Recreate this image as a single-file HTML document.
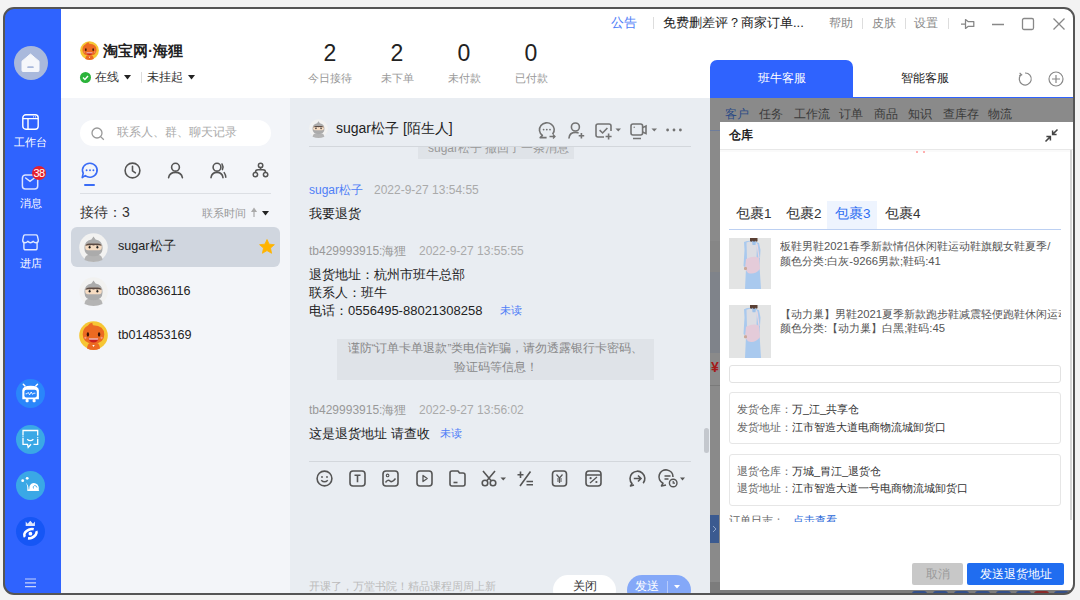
<!DOCTYPE html>
<html><head><meta charset="utf-8">
<style>
*{margin:0;padding:0;box-sizing:border-box}
html,body{width:1080px;height:600px;overflow:hidden;background:#f3f3f3;font-family:"Liberation Sans",sans-serif;color:#333}
.a{position:absolute}
#win{position:absolute;left:4px;top:8px;width:1070px;height:586px;border-radius:10px;overflow:hidden;background:#fff}
#pg{position:absolute;left:-4px;top:-8px;width:1080px;height:600px}
#frame{position:absolute;left:3px;top:7px;width:1072px;height:588px;border:2px solid #555;border-radius:11px;pointer-events:none}
.t{position:absolute;white-space:nowrap;line-height:1}
svg{position:absolute;overflow:visible}
.prod{position:absolute;width:42px;height:51px;background:#dcdcdc;overflow:hidden}
.prod:before{content:"";position:absolute;left:13px;top:5px;width:14px;height:46px;border-radius:6px 6px 2px 2px;background:#9cc0ea}
.prod:after{content:"";position:absolute;left:12px;top:22px;width:13px;height:12px;border-radius:4px;background:#e0bcd0}
.ninja{position:absolute;width:29px;height:29px;border-radius:50%;background:#f1f1ef;overflow:hidden}
.ninja:before{content:"";position:absolute;left:7px;top:5px;width:15px;height:15px;border-radius:50% 50% 45% 45%;background:#9a9a9a}
.ninja:after{content:"";position:absolute;left:8px;top:11px;width:13px;height:5px;border-radius:2px;background:#f3dcc8;box-shadow:0 10px 0 -1px #a8a8a8}

</style></head><body>
<div id="win"><div id="pg">
  <!-- sidebar -->
  <div class="a" style="left:0;top:0;width:61px;height:600px;background:#2f63fe"></div>
  <!-- header -->
  <div class="a" style="left:61px;top:0;width:1019px;height:98px;background:#fff"></div>
  <!-- list panel -->
  <div class="a" style="left:61px;top:98px;width:229px;height:502px;background:#f3f5f9"></div>
  <!-- chat panel -->
  <div class="a" style="left:290px;top:98px;width:420px;height:502px;background:#e9edf2"></div>
  <!-- right panel (under overlay) -->
  <div class="a" style="left:710px;top:98px;width:370px;height:502px;background:#8a8a8a"></div>
  <!-- blue tab -->
  <div class="a" style="left:710px;top:60px;width:143px;height:38px;background:#2f63fe;border-radius:7px 7px 0 0"></div>
  <div class="a" style="left:710px;top:97px;width:370px;height:1px;background:#2f63fe"></div>


  <!-- ===== sidebar ===== -->
  <div class="a" style="left:14px;top:46px;width:34px;height:34px;border-radius:50%;background:#a9b9dc"></div>
  <svg style="left:21px;top:53px" width="20" height="20"><path d="M1 8.2 L9.5 1 L18 8.2 V17.5 Q18 18.5 17 18.5 H2 Q1 18.5 1 17.5Z" fill="#f5f7fb" stroke="#f5f7fb" stroke-width="1" stroke-linejoin="round"/><rect x="6.2" y="13.3" width="6.6" height="1.8" rx="0.9" fill="#a9b9dc"/></svg>
  <svg style="left:22px;top:114px" width="17" height="16"><rect x="0.8" y="0.8" width="15.4" height="14.4" rx="3" stroke="#fff" stroke-width="1.4" fill="none"/><path d="M1 4.6 H16 M6 4.6 V15" stroke="#fff" stroke-width="1.4"/><circle cx="11.6" cy="2.8" r="0.6" fill="#fff"/><circle cx="13.6" cy="2.8" r="0.6" fill="#fff"/></svg>
  <div class="t" style="left:0;top:137px;width:61px;text-align:center;font-size:10.5px;color:#fff">工作台</div>
  <svg style="left:21px;top:174px" width="18" height="16"><rect x="1.4" y="0.9" width="15.3" height="14.2" rx="3" stroke="#dbe4ff" stroke-width="1.5" fill="none"/><path d="M4.6 4 L9 7.4 L13.4 4" stroke="#dbe4ff" stroke-width="1.5" fill="none" stroke-linecap="round"/></svg>
  <div class="a" style="left:32px;top:166px;width:14px;height:14px;border-radius:7px;background:#e5202e"></div>
  <div class="t" style="left:32px;top:167.5px;width:14px;text-align:center;font-size:11px;color:#fff;letter-spacing:-0.6px">38</div>
  <div class="t" style="left:0;top:198px;width:61px;text-align:center;font-size:10.5px;color:#fff">消息</div>
  <svg style="left:22px;top:234px" width="17" height="17"><path d="M3 0.9 H14 Q15 0.9 15.4 1.9 L16.3 6.2 Q16.3 8.7 14 8.7 Q12.2 8.7 11.2 7.3 Q10.1 8.7 8.5 8.7 Q6.9 8.7 5.8 7.3 Q4.8 8.7 3 8.7 Q0.7 8.7 0.7 6.2 L1.6 1.9 Q2 0.9 3 0.9Z" stroke="#dfe8ff" stroke-width="1.4" fill="none" stroke-linejoin="round"/><path d="M1.9 8.4 V13.9 Q1.9 15.8 3.8 15.8 H13.2 Q15.1 15.8 15.1 13.9 V8.4" stroke="#dfe8ff" stroke-width="1.4" fill="none"/></svg>
  <div class="t" style="left:0;top:258px;width:61px;text-align:center;font-size:10.5px;color:#fff">进店</div>
  <!-- app icons -->
  <div class="a" style="left:16px;top:379px;width:29px;height:29px;border-radius:50%;background:#2a86fa"></div>
  <svg style="left:16px;top:379px" width="29" height="29"><path d="M7.3 5.3 L9 7 M21.5 5.3 L19.8 7" stroke="#fff" stroke-width="1.5" stroke-linecap="round"/><path d="M6.3 20.3 V11.5 Q6.3 6.8 14.6 6.8 Q22.9 6.8 22.9 11.5 V20.3Z" fill="#fff"/><rect x="8.4" y="10.8" width="12.4" height="7.6" rx="2" fill="#2a86fa"/><path d="M9.6 14.8 H11 L12.2 13.4 L13.6 15.8 L15.2 13 L16.6 15.4 L17.6 14.2 H19.4" stroke="#fff" stroke-width="0.9" fill="none"/><rect x="9.6" y="20" width="3" height="3.2" rx="1" fill="#fff"/><rect x="16.6" y="20" width="3" height="3.2" rx="1" fill="#fff"/></svg>
  <div class="a" style="left:16px;top:425px;width:29px;height:29px;border-radius:50%;background:#3aa8e6"></div>
  <svg style="left:16px;top:425px" width="29" height="29"><path d="M7 10.5 V5.5 H21.7 V10.5 M7 13 V19.3 H11.5 L12.2 22.3 L15 19.3 M17.5 19.3 H21.7 V14" stroke="#fff" stroke-width="1.3" fill="none"/><path d="M11.2 14.2 Q14.3 17 17.4 14.2" stroke="#fff" stroke-width="1.3" fill="none"/><circle cx="7" cy="11.8" r="0.7" fill="#fff"/><circle cx="21.7" cy="12.7" r="0.7" fill="#fff"/></svg>
  <div class="a" style="left:16px;top:471px;width:29px;height:29px;border-radius:50%;background:#3aa8e6"></div>
  <svg style="left:16px;top:471px" width="29" height="29"><circle cx="6.7" cy="9.7" r="1.4" fill="#fff"/><circle cx="11.2" cy="7.3" r="1.4" fill="#fff"/><path d="M9.7 11.8 Q11 13 11.3 16 V20 H23.3 L22.8 19.2 Q23.5 16 21.5 13.6 Q18.5 10.8 15 13 Q12.8 14.8 13.2 18.5 L12.6 18.5 Q12.6 14 9.7 11.8Z" fill="#fff"/><path d="M17.5 17.5 Q16.4 15.5 18.4 14.6 Q20.6 14.2 21 16.6" stroke="#3aa8e6" stroke-width="0.8" fill="none"/></svg>
  <div class="a" style="left:16px;top:517px;width:29px;height:29px;border-radius:50%;background:#1656f5"></div>
  <svg style="left:16px;top:517px" width="29" height="29"><path d="M9.7 4.5 L11.6 6.8 L14.3 3.8 L17 6.8 L18.9 4.5 V9 H9.7Z" fill="#dfe7fd"/><ellipse cx="14.4" cy="16.7" rx="6.4" ry="4.3" transform="rotate(-22 14.4 16.7)" stroke="#fff" stroke-width="2.6" fill="none" stroke-dasharray="14.3 3.1" stroke-dashoffset="2"/><circle cx="14.4" cy="16.7" r="1.9" fill="#fff"/></svg>
  <svg style="left:25px;top:578px" width="11" height="10"><path d="M0 1 H11 M0 4.8 H11 M0 8.6 H11" stroke="#c8d4fc" stroke-width="1.2"/></svg>

  <!-- ===== list panel ===== -->
  <div class="a" style="left:80px;top:120px;width:191px;height:26px;border-radius:13px;background:#fff"></div>
  <svg style="left:91px;top:127px" width="14" height="14"><circle cx="6" cy="6" r="5" stroke="#999" stroke-width="1.3" fill="none"/><path d="M9.6 9.6 L12.8 12.8" stroke="#999" stroke-width="1.3"/></svg>
  <div class="t" style="left:117px;top:127px;font-size:11.5px;color:#aaa">联系人、群、聊天记录</div>
  <!-- tab icons -->
  <svg style="left:81px;top:162px" width="18" height="17"><path d="M9 1.2 A7.3 7 0 1 1 4.2 13.6 L1.2 15.6 L2.2 11.2 A7.3 7 0 0 1 9 1.2Z" stroke="#3a6cf6" stroke-width="1.6" fill="none" stroke-linejoin="round"/><circle cx="5.6" cy="8.2" r="0.95" fill="#3a6cf6"/><circle cx="9" cy="8.2" r="0.95" fill="#3a6cf6"/><circle cx="12.4" cy="8.2" r="0.95" fill="#3a6cf6"/></svg>
  <div class="a" style="left:84px;top:184px;width:11px;height:2px;border-radius:1px;background:#3a6cf6"></div>
  <svg style="left:124px;top:162px" width="17" height="17"><circle cx="8.5" cy="8.5" r="7.4" stroke="#555" stroke-width="1.6" fill="none"/><path d="M8.5 4.3 V8.8 L11.4 10.8" stroke="#555" stroke-width="1.6" fill="none" stroke-linecap="round"/></svg>
  <svg style="left:167px;top:162px" width="17" height="17"><circle cx="8.5" cy="5.2" r="3.9" stroke="#555" stroke-width="1.6" fill="none"/><path d="M1.6 15.6 Q2.6 10.4 8.5 10.4 Q14.4 10.4 15.4 15.6" stroke="#555" stroke-width="1.6" fill="none" stroke-linecap="round"/></svg>
  <svg style="left:210px;top:162px" width="17" height="17"><circle cx="7" cy="5.2" r="3.9" stroke="#555" stroke-width="1.6" fill="none"/><path d="M1 15.6 Q1.8 10.4 7 10.4 Q12.2 10.4 13 15.6" stroke="#555" stroke-width="1.6" fill="none" stroke-linecap="round"/><path d="M12 2 Q13.8 4.8 12.4 7.6 M14.2 10.6 Q15.6 12.6 15.8 15.2" stroke="#555" stroke-width="1.5" fill="none" stroke-linecap="round"/></svg>
  <svg style="left:252px;top:162px" width="17" height="17"><circle cx="8.6" cy="3.4" r="2.2" stroke="#555" stroke-width="1.5" fill="none"/><circle cx="3.4" cy="12.6" r="2.2" stroke="#555" stroke-width="1.5" fill="none"/><circle cx="13.6" cy="12.6" r="2.2" stroke="#555" stroke-width="1.5" fill="none"/><path d="M8.6 5.6 V7.8 M3.4 10.4 Q3.4 7.8 6 7.8 H11 Q13.6 7.8 13.6 10.4" stroke="#555" stroke-width="1.5" fill="none"/></svg>
  <div class="a" style="left:80px;top:193px;width:191px;height:1px;background:#dcdfe4"></div>
  <div class="t" style="left:80px;top:205px;font-size:14px;color:#333">接待：3</div>
  <div class="t" style="left:202px;top:208px;font-size:11px;color:#999">联系时间</div>
  <svg style="left:250.5px;top:207px" width="6" height="11"><path d="M3 10 V3 M1 4.5 L3 1.5 L5 4.5Z" stroke="#aaa" stroke-width="1.2" fill="#aaa"/></svg>
  <svg style="left:261.5px;top:210.5px" width="8" height="5"><path d="M0 0 H7 L3.5 4.5Z" fill="#222"/></svg>
  <!-- selected row -->
  <div class="a" style="left:71px;top:227px;width:209px;height:40px;border-radius:6px;background:#d0d6df"></div>
  <!-- avatars -->
  <svg viewBox="0 0 29 29" width="29" height="29" style="left:79px;top:233px"><circle cx="14.5" cy="14.5" r="14.3" fill="#f2f2f1"/><path d="M5.5 27 Q6 22.5 9 22 H20 Q23 22.5 23.5 27 Q19 29 14.5 29 Q10 29 5.5 27Z" fill="#b4b4b4"/><path d="M14.5 3.6 L16.6 6.6 Q23.6 8 23.6 15 Q23.6 23.2 14.5 23.2 Q5.4 23.2 5.4 15 Q5.4 8 12.4 6.6Z" fill="#ababab"/><rect x="6.3" y="10.8" width="16.4" height="6.4" rx="2.6" fill="#f6dcc2"/><path d="M6.3 13 Q7 10.6 10 10.6 H19 Q22 10.6 22.7 13 Q20 11.8 18 12.6 Q16.5 11.6 14.5 12.6 Q12.5 11.6 11 12.6 Q9 11.8 6.3 13Z" fill="#5a4a42"/><ellipse cx="10.6" cy="14.2" rx="1" ry="1.3" fill="#222"/><ellipse cx="18.4" cy="14.2" rx="1" ry="1.3" fill="#222"/></svg>
  <div class="t" style="left:118px;top:239.5px;font-size:12.6px;color:#222">sugar松子</div>
  <svg style="left:259px;top:239px" width="16" height="15"><path d="M8 0.5 L10.2 5.2 L15.4 5.7 L11.5 9.1 L12.6 14.3 L8 11.6 L3.4 14.3 L4.5 9.1 L0.6 5.7 L5.8 5.2Z" fill="#ffb400" stroke="#ffb400" stroke-width="0.8" stroke-linejoin="round"/></svg>
  <svg viewBox="0 0 29 29" width="29" height="29" style="left:79px;top:277px"><circle cx="14.5" cy="14.5" r="14.3" fill="#f2f2f1"/><path d="M5.5 27 Q6 22.5 9 22 H20 Q23 22.5 23.5 27 Q19 29 14.5 29 Q10 29 5.5 27Z" fill="#b4b4b4"/><path d="M14.5 3.6 L16.6 6.6 Q23.6 8 23.6 15 Q23.6 23.2 14.5 23.2 Q5.4 23.2 5.4 15 Q5.4 8 12.4 6.6Z" fill="#ababab"/><rect x="6.3" y="10.8" width="16.4" height="6.4" rx="2.6" fill="#f6dcc2"/><path d="M6.3 13 Q7 10.6 10 10.6 H19 Q22 10.6 22.7 13 Q20 11.8 18 12.6 Q16.5 11.6 14.5 12.6 Q12.5 11.6 11 12.6 Q9 11.8 6.3 13Z" fill="#5a4a42"/><ellipse cx="10.6" cy="14.2" rx="1" ry="1.3" fill="#222"/><ellipse cx="18.4" cy="14.2" rx="1" ry="1.3" fill="#222"/></svg>
  <div class="t" style="left:118px;top:284.5px;font-size:12.6px;color:#222">tb038636116</div>
  <svg viewBox="0 0 29 29" width="29" height="29" style="left:79px;top:321px"><circle cx="14.5" cy="14.5" r="14.3" fill="#f6c634"/><path d="M8 27.5 Q8.5 22.5 11 22 H18 Q20.5 22.5 21 27.5 Q18 29 14.5 29 Q11 29 8 27.5Z" fill="#ec6a22"/><path d="M13.3 24 L14.5 26 L15.7 24Z" fill="#fff"/><path d="M9 4.6 Q10.5 1.6 13.6 1.8 Q12.8 3.2 14.2 4.3 Q25.3 4.8 25.3 13.5 Q25.3 22.6 14.5 22.6 Q3.7 22.6 3.7 13.5 Q3.7 7 9 4.6Z" fill="#ec6a22"/><ellipse cx="8.9" cy="13.4" rx="1.2" ry="2.2" fill="#3a1408"/><ellipse cx="20.1" cy="13.4" rx="1.2" ry="2.2" fill="#3a1408"/><circle cx="6.4" cy="16.8" r="1.1" fill="#f59a80"/><circle cx="22.6" cy="16.8" r="1.1" fill="#f59a80"/><path d="M9.6 17.4 H19.4 Q18.6 21.4 14.5 21.4 Q10.4 21.4 9.6 17.4Z" fill="#c8201e"/><path d="M9.8 17.4 H19.2 L18.9 18.6 H10.1Z" fill="#fff"/></svg>
  <div class="t" style="left:118px;top:328.5px;font-size:12.6px;color:#222">tb014853169</div>

  <!-- ===== chat panel ===== -->
  <!-- recall notice (clipped) -->
  <div class="a" style="left:418px;top:139px;width:156px;height:20px;background:#dfe3e8;overflow:hidden"><div class="t" style="left:10px;top:3px;font-size:12px;color:#999">sugar松子 撤回了一条消息</div></div>
  <div class="a" style="left:290px;top:98px;width:419px;height:48px;background:#e9edf2"></div>
  <!-- header icons -->
  <svg style="left:538px;top:122px" width="18" height="17"><path d="M14.6 12.2 A7.4 7 0 1 0 4.4 13.4 L2.2 15.6 H8.6" stroke="#737373" stroke-width="1.6" fill="none" stroke-linejoin="round"/><circle cx="5.6" cy="7.6" r="0.9" fill="#737373"/><circle cx="8.8" cy="7.6" r="0.9" fill="#737373"/><circle cx="12" cy="7.6" r="0.9" fill="#737373"/><path d="M11.5 14.5 H17 M15 12.5 L17 14.5 L15 16.5" stroke="#737373" stroke-width="1.3" fill="none"/></svg>
  <svg style="left:568px;top:122px" width="17" height="17"><circle cx="7.4" cy="5" r="4" stroke="#737373" stroke-width="1.6" fill="none"/><path d="M1 16 Q1.6 10.4 7.4 10.4 Q9 10.4 10 10.8" stroke="#737373" stroke-width="1.6" fill="none" stroke-linecap="round"/><path d="M13.4 11 V16.5 M10.7 13.8 H16.2" stroke="#737373" stroke-width="1.6"/></svg>
  <svg style="left:595px;top:123px" width="28" height="17"><path d="M9 14 H3 Q1 14 1 12 V3 Q1 1 3 1 H14 Q16 1 16 3 V8" stroke="#737373" stroke-width="1.6" fill="none"/><path d="M4.6 7.2 L7.6 10 L12.4 5" stroke="#737373" stroke-width="1.6" fill="none"/><path d="M13.6 10.5 V16.5 M10.6 13.5 H16.6" stroke="#737373" stroke-width="1.6"/><path d="M20.5 5.5 H26 L23.25 8.5Z" fill="#737373"/></svg>
  <svg style="left:630px;top:123px" width="28" height="17"><rect x="1" y="1" width="11.6" height="11" rx="2" stroke="#737373" stroke-width="1.6" fill="none"/><path d="M12.6 4.6 L16 3 V10.6 L12.6 9" stroke="#737373" stroke-width="1.6" fill="none"/><path d="M3 15.5 H11" stroke="#737373" stroke-width="1.6"/><circle cx="4.2" cy="4.2" r="0.7" fill="#737373"/><path d="M21.5 5.5 H27 L24.25 8.5Z" fill="#737373"/></svg>
  <svg style="left:666px;top:128px" width="16" height="4"><circle cx="1.6" cy="2" r="1.4" fill="#737373"/><circle cx="8" cy="2" r="1.4" fill="#737373"/><circle cx="14.4" cy="2" r="1.4" fill="#737373"/></svg>
  <svg viewBox="0 0 29 29" width="19" height="19" style="left:309px;top:119px"><circle cx="14.5" cy="14.5" r="14.3" fill="#f2f2f1"/><path d="M5.5 27 Q6 22.5 9 22 H20 Q23 22.5 23.5 27 Q19 29 14.5 29 Q10 29 5.5 27Z" fill="#b4b4b4"/><path d="M14.5 3.6 L16.6 6.6 Q23.6 8 23.6 15 Q23.6 23.2 14.5 23.2 Q5.4 23.2 5.4 15 Q5.4 8 12.4 6.6Z" fill="#ababab"/><rect x="6.3" y="10.8" width="16.4" height="6.4" rx="2.6" fill="#f6dcc2"/><path d="M6.3 13 Q7 10.6 10 10.6 H19 Q22 10.6 22.7 13 Q20 11.8 18 12.6 Q16.5 11.6 14.5 12.6 Q12.5 11.6 11 12.6 Q9 11.8 6.3 13Z" fill="#5a4a42"/><ellipse cx="10.6" cy="14.2" rx="1" ry="1.3" fill="#222"/><ellipse cx="18.4" cy="14.2" rx="1" ry="1.3" fill="#222"/></svg>
  <div class="t" style="left:336px;top:121px;font-size:14px;color:#222">sugar松子 [陌生人]</div>
  <div class="a" style="left:309px;top:146px;width:382px;height:1px;background:#d3d7dc"></div>
  <!-- messages -->
  <div class="t" style="left:309px;top:184px;font-size:12px;color:#4f7ef7">sugar松子</div>
  <div class="t" style="left:374px;top:184px;font-size:12px;color:#aaa">2022-9-27 13:54:55</div>
  <div class="t" style="left:309px;top:207px;font-size:13px;color:#222">我要退货</div>
  <div class="t" style="left:309px;top:245px;font-size:12px;color:#999">tb429993915:海狸</div>
  <div class="t" style="left:419px;top:245px;font-size:12px;color:#aaa">2022-9-27 13:55:55</div>
  <div class="t" style="left:309px;top:268px;font-size:13px;color:#222">退货地址：杭州市班牛总部</div>
  <div class="t" style="left:309px;top:286px;font-size:13px;color:#222">联系人：班牛</div>
  <div class="t" style="left:309px;top:304px;font-size:13px;color:#222">电话：0556495-88021308258</div>
  <div class="t" style="left:500px;top:305px;font-size:11px;color:#4f7ef7">未读</div>
  <div class="a" style="left:337px;top:339px;width:317px;height:41px;background:#dfe3e8"></div>
  <div class="t" style="left:337px;top:343px;width:317px;text-align:center;font-size:11.5px;color:#888">谨防“订单卡单退款”类电信诈骗，请勿透露银行卡密码、</div>
  <div class="t" style="left:337px;top:362px;width:317px;text-align:center;font-size:11.5px;color:#888">验证码等信息！</div>
  <div class="t" style="left:309px;top:404px;font-size:12px;color:#999">tb429993915:海狸</div>
  <div class="t" style="left:419px;top:404px;font-size:12px;color:#aaa">2022-9-27 13:56:02</div>
  <div class="t" style="left:309px;top:427px;font-size:13px;color:#222">这是退货地址 请查收</div>
  <div class="t" style="left:440px;top:428px;font-size:11px;color:#4f7ef7">未读</div>
  <!-- scrollbar -->
  <div class="a" style="left:704px;top:428px;width:5px;height:25px;border-radius:3px;background:#c4c8ce"></div>
  <!-- toolbar -->
  <div class="a" style="left:309px;top:461px;width:382px;height:1px;background:#d3d7dc"></div>
  <svg style="left:316px;top:470px" width="17" height="17"><circle cx="8.5" cy="8.5" r="7.4" stroke="#555" stroke-width="1.6" fill="none"/><circle cx="6" cy="7" r="0.9" fill="#555"/><circle cx="11" cy="7" r="0.9" fill="#555"/><path d="M5.2 10.2 Q8.5 13.4 11.8 10.2" stroke="#555" stroke-width="1.4" fill="none"/></svg>
  <svg style="left:349px;top:470px" width="17" height="17"><rect x="1" y="1" width="15" height="15" rx="3" stroke="#555" stroke-width="1.6" fill="none"/><path d="M5.5 5.2 H11.5 M8.5 5.2 V12.2" stroke="#555" stroke-width="1.6"/></svg>
  <svg style="left:382px;top:470px" width="17" height="17"><rect x="1" y="1" width="15" height="15" rx="3" stroke="#555" stroke-width="1.6" fill="none"/><path d="M3.5 12.5 Q6 9 8 11 Q10 13 13.5 8.5" stroke="#555" stroke-width="1.5" fill="none"/><circle cx="5.6" cy="5.4" r="1.3" stroke="#555" stroke-width="1.1" fill="none"/></svg>
  <svg style="left:416px;top:470px" width="17" height="17"><rect x="1" y="1" width="15" height="15" rx="3" stroke="#555" stroke-width="1.6" fill="none"/><path d="M7 5.5 L11.2 8.5 L7 11.5Z" stroke="#555" stroke-width="1.3" fill="none" stroke-linejoin="round"/></svg>
  <svg style="left:449px;top:470px" width="17" height="17"><path d="M1 3 Q1 1 3 1 H9 L10.5 3 H14 Q16 3 16 5 V14 Q16 16 14 16 H3 Q1 16 1 14Z" stroke="#555" stroke-width="1.6" fill="none" stroke-linejoin="round"/><path d="M4.5 12.5 H8.5" stroke="#555" stroke-width="1.6"/></svg>
  <svg style="left:481px;top:470px" width="26" height="17"><circle cx="4" cy="13" r="2.8" stroke="#555" stroke-width="1.6" fill="none"/><circle cx="12" cy="13" r="2.8" stroke="#555" stroke-width="1.6" fill="none"/><path d="M5.8 10.8 L14 1 M10.2 10.8 L2 1" stroke="#555" stroke-width="1.6"/><path d="M19.5 7.5 H25 L22.25 10.5Z" fill="#555"/></svg>
  <svg style="left:517px;top:470px" width="17" height="17"><path d="M3.5 1.5 V8 M0.5 4.8 H6.5 M13.5 1.5 L3 16 M9.5 11.5 H16 M9.5 14.8 H16" stroke="#555" stroke-width="1.6"/></svg>
  <svg style="left:551px;top:470px" width="17" height="17"><rect x="1.5" y="1" width="14" height="15" rx="3" stroke="#555" stroke-width="1.6" fill="none"/><path d="M5.5 4.5 L8.5 8 L11.5 4.5 M8.5 8 V13 M6 9 H11 M6 11 H11" stroke="#555" stroke-width="1.2" fill="none"/></svg>
  <svg style="left:585px;top:470px" width="17" height="17"><rect x="1" y="1" width="15" height="15" rx="3" stroke="#555" stroke-width="1.6" fill="none"/><path d="M1 5 H16 M5 13 L12 7" stroke="#555" stroke-width="1.3"/><circle cx="5.6" cy="8.2" r="1.1" fill="#555"/><circle cx="11.4" cy="12" r="1.1" fill="#555"/></svg>
  <svg style="left:629px;top:470px" width="17" height="17"><path d="M14.2 13.2 A7.4 7.4 0 1 0 3 13.6 L1.5 16 L5 15" stroke="#555" stroke-width="1.6" fill="none" stroke-linejoin="round"/><path d="M4.8 8.5 H12 M9 5.5 L12 8.5 L9 11.5" stroke="#555" stroke-width="1.6" fill="none"/></svg>
  <svg style="left:660px;top:470px" width="26" height="18"><path d="M13 7 A7 7 0 1 0 3 13.2 L1.5 16 L6 15" stroke="#555" stroke-width="1.6" fill="none" stroke-linejoin="round"/><path d="M4.5 6 H10.5 M4.5 9 H8.5" stroke="#555" stroke-width="1.4"/><circle cx="13.2" cy="13" r="3.8" stroke="#555" stroke-width="1.4" fill="#e9edf2"/><path d="M13.2 11 V13.2 H15" stroke="#555" stroke-width="1.2" fill="none"/><path d="M20 7.5 H25 L22.5 10.5Z" fill="#555"/></svg>
  <!-- bottom -->
  <div class="t" style="left:309px;top:581px;font-size:11px;color:#bbb">开课了，万堂书院！精品课程周周上新</div>
  <div class="a" style="left:553px;top:575px;width:63px;height:30px;border-radius:15px;background:#fff"></div>
  <div class="t" style="left:553px;top:580px;width:63px;text-align:center;font-size:12px;color:#333">关闭</div>
  <div class="a" style="left:627px;top:575px;width:64px;height:30px;border-radius:15px;background:#84a8f8"></div>
  <div class="t" style="left:635px;top:580px;font-size:12px;color:#fff">发送</div>
  <div class="a" style="left:667px;top:581px;width:1px;height:12px;background:#b7cbfb"></div>
  <svg style="left:674px;top:585px" width="7" height="5"><path d="M0 0 H6 L3 3.5Z" fill="#fff"/></svg>
  <!-- ===== header ===== -->
  <!-- mascot avatar -->
  <svg viewBox="0 0 29 29" width="19" height="19" style="left:80px;top:41px"><circle cx="14.5" cy="14.5" r="14.3" fill="#f6c634"/><path d="M8 27.5 Q8.5 22.5 11 22 H18 Q20.5 22.5 21 27.5 Q18 29 14.5 29 Q11 29 8 27.5Z" fill="#ec6a22"/><path d="M13.3 24 L14.5 26 L15.7 24Z" fill="#fff"/><path d="M9 4.6 Q10.5 1.6 13.6 1.8 Q12.8 3.2 14.2 4.3 Q25.3 4.8 25.3 13.5 Q25.3 22.6 14.5 22.6 Q3.7 22.6 3.7 13.5 Q3.7 7 9 4.6Z" fill="#ec6a22"/><ellipse cx="8.9" cy="13.4" rx="1.2" ry="2.2" fill="#3a1408"/><ellipse cx="20.1" cy="13.4" rx="1.2" ry="2.2" fill="#3a1408"/><circle cx="6.4" cy="16.8" r="1.1" fill="#f59a80"/><circle cx="22.6" cy="16.8" r="1.1" fill="#f59a80"/><path d="M9.6 17.4 H19.4 Q18.6 21.4 14.5 21.4 Q10.4 21.4 9.6 17.4Z" fill="#c8201e"/><path d="M9.8 17.4 H19.2 L18.9 18.6 H10.1Z" fill="#fff"/></svg>
  <div class="t" style="left:103px;top:43px;font-size:15px;font-weight:bold;color:#222">淘宝网·海狸</div>
  <!-- status -->
  <div class="a" style="left:80px;top:72px;width:11px;height:11px;border-radius:50%;background:#2bb33a"></div>
  <svg style="left:80px;top:72px" width="11" height="11"><path d="M3 5.6 L4.9 7.4 L8 4" stroke="#fff" stroke-width="1.4" fill="none"/></svg>
  <div class="t" style="left:95px;top:71px;font-size:12px;color:#333">在线</div>
  <svg style="left:124px;top:75px" width="8" height="5"><path d="M0 0 H7 L3.5 4.5Z" fill="#222"/></svg>
  <div class="a" style="left:141px;top:72px;width:1px;height:11px;background:#ddd"></div>
  <div class="t" style="left:147px;top:71px;font-size:12px;color:#333">未挂起</div>
  <svg style="left:188px;top:75px" width="8" height="5"><path d="M0 0 H7 L3.5 4.5Z" fill="#222"/></svg>
  <!-- stats -->
  <div class="t" style="left:310px;top:42px;width:40px;text-align:center;font-size:23px;color:#222">2</div>
  <div class="t" style="left:377px;top:42px;width:40px;text-align:center;font-size:23px;color:#222">2</div>
  <div class="t" style="left:444px;top:42px;width:40px;text-align:center;font-size:23px;color:#222">0</div>
  <div class="t" style="left:511px;top:42px;width:40px;text-align:center;font-size:23px;color:#222">0</div>
  <div class="t" style="left:300px;top:73px;width:60px;text-align:center;font-size:11px;color:#999">今日接待</div>
  <div class="t" style="left:367px;top:73px;width:60px;text-align:center;font-size:11px;color:#999">未下单</div>
  <div class="t" style="left:434px;top:73px;width:60px;text-align:center;font-size:11px;color:#999">未付款</div>
  <div class="t" style="left:501px;top:73px;width:60px;text-align:center;font-size:11px;color:#999">已付款</div>
  <!-- notice -->
  <div class="t" style="left:611px;top:16px;font-size:13px;color:#4f7ef7">公告</div>
  <div class="a" style="left:653px;top:17px;width:1px;height:12px;background:#ddd"></div>
  <div class="t" style="left:663px;top:16px;font-size:13px;color:#222">免费删差评？商家订单...</div>
  <div class="t" style="left:829px;top:17px;font-size:12px;color:#888">帮助</div>
  <div class="a" style="left:862px;top:18px;width:1px;height:11px;background:#ddd"></div>
  <div class="t" style="left:872px;top:17px;font-size:12px;color:#888">皮肤</div>
  <div class="a" style="left:905px;top:18px;width:1px;height:11px;background:#ddd"></div>
  <div class="t" style="left:914px;top:17px;font-size:12px;color:#888">设置</div>
  <div class="a" style="left:948px;top:18px;width:1px;height:11px;background:#ddd"></div>
  <!-- window controls -->
  <svg style="left:960px;top:17px" width="16" height="14"><path d="M1 7 H5.2 M5.5 2.6 L8 4.6 H13.8 V9.4 H8 L5.5 11.4Z" stroke="#858585" stroke-width="1.25" fill="none" stroke-linejoin="round"/></svg>
  <svg style="left:991px;top:17px" width="14" height="14"><path d="M1 7.5 H13" stroke="#888" stroke-width="1.3"/></svg>
  <svg style="left:1021px;top:17px" width="14" height="14"><rect x="1.5" y="1.5" width="11" height="11" rx="1.5" stroke="#888" stroke-width="1.3" fill="none"/></svg>
  <svg style="left:1052px;top:17px" width="14" height="14"><path d="M1.5 1.5 L12.5 12.5 M12.5 1.5 L1.5 12.5" stroke="#888" stroke-width="1.3"/></svg>
  <!-- tabs -->
  <div class="t" style="left:710px;top:72px;width:143px;text-align:center;font-size:12px;color:#fff">班牛客服</div>
  <div class="t" style="left:853px;top:72px;width:143px;text-align:center;font-size:12px;color:#222">智能客服</div>
  <svg style="left:1017px;top:71px" width="16" height="16"><path d="M4.2 3.6 A6 6 0 1 0 8 2" stroke="#888" stroke-width="1.2" fill="none"/><path d="M2.6 1.8 L4.6 3.8 L2.2 4.6" stroke="#888" stroke-width="1.2" fill="none"/></svg>
  <svg style="left:1048px;top:71px" width="16" height="16"><circle cx="8" cy="8" r="7" stroke="#888" stroke-width="1.2" fill="none"/><path d="M8 4 V12 M4 8 H12" stroke="#888" stroke-width="1.2"/></svg>

  <!-- ===== right panel under overlay ===== -->
  <div class="t" style="left:725px;top:108px;font-size:12px;color:#2c4a86">客户</div>
  <div class="t" style="left:759px;top:108px;font-size:12px;color:#3a3a3a">任务</div>
  <div class="t" style="left:794px;top:108px;font-size:12px;color:#3a3a3a">工作流</div>
  <div class="t" style="left:839px;top:108px;font-size:12px;color:#3a3a3a">订单</div>
  <div class="t" style="left:874px;top:108px;font-size:12px;color:#3a3a3a">商品</div>
  <div class="t" style="left:908px;top:108px;font-size:12px;color:#3a3a3a">知识</div>
  <div class="t" style="left:943px;top:108px;font-size:12px;color:#3a3a3a">查库存</div>
  <div class="t" style="left:988px;top:108px;font-size:12px;color:#3a3a3a">物流</div>
  <div class="a" style="left:710px;top:130px;width:10px;height:1px;background:#6e7d9c"></div>
  <div class="a" style="left:710px;top:241px;width:10px;height:31px;background:#868686"></div>
  <div class="a" style="left:710px;top:272px;width:10px;height:81px;background:#7f838a"></div>
  <div class="t" style="left:711px;top:360px;font-size:14px;font-weight:bold;color:#a51818">¥</div>
  <div class="a" style="left:710px;top:385px;width:10px;height:1px;background:#7a7a7a"></div>
  <div class="a" style="left:710px;top:515px;width:9px;height:28px;background:#3b5a90"></div>
  <svg style="left:712px;top:525px" width="5" height="8"><path d="M1 1 L4 4 L1 7" stroke="#8ea3c8" stroke-width="1" fill="none"/></svg>
  <div class="a" style="left:710px;top:582px;width:370px;height:18px;background:#7c7c7c"></div>
  <div class="a" style="left:912px;top:591px;width:15px;height:6px;border-radius:3px;background:#34508a"></div>
  <div class="a" style="left:933px;top:591px;width:15px;height:6px;border-radius:3px;background:#34508a"></div>
  <div class="a" style="left:954px;top:591px;width:15px;height:6px;border-radius:3px;background:#34508a"></div>
  <div class="a" style="left:975px;top:591px;width:15px;height:6px;border-radius:3px;background:#34508a"></div>
  <div class="a" style="left:996px;top:591px;width:15px;height:6px;border-radius:3px;background:#34508a"></div>
  <div class="a" style="left:1016px;top:591px;width:15px;height:6px;border-radius:3px;background:#34508a"></div>
  <div class="a" style="left:1034px;top:591px;width:15px;height:6px;border-radius:3px;background:#8a2a2a"></div>
  <div class="a" style="left:1054px;top:591px;width:15px;height:6px;border-radius:3px;background:#34508a"></div>
  <!-- ===== modal ===== -->
  <div class="a" style="left:720px;top:122px;width:360px;height:468px;background:#fff"></div>
  <div class="t" style="left:729px;top:130px;font-size:11.5px;font-weight:bold;color:#222">仓库</div>
  <svg style="left:1044px;top:128px" width="15" height="15"><path d="M13.5 1.5 L8.6 6.4 M8.6 2.4 V6.4 H12.6 M1.5 13.5 L6.4 8.6 M2.4 8.6 H6.4 V12.6" stroke="#444" stroke-width="1.5" fill="none"/></svg>
  <div class="a" style="left:720px;top:149px;width:353px;height:1px;background:#e8e8e8"></div>
  <div class="a" style="left:720px;top:150px;width:350px;height:2px;background:#fafafa"></div>
  <div class="a" style="left:916px;top:151px;width:2px;height:1.5px;background:#ffb0b0"></div>
  <div class="a" style="left:923px;top:151px;width:2px;height:1.5px;background:#ffb0b0"></div>
  <!-- scrollbar -->
  <div class="a" style="left:1070px;top:150px;width:2px;height:370px;background:#d6d6d6"></div>
  <!-- package tabs -->
  <div class="a" style="left:827px;top:201px;width:50px;height:28px;background:#eef4fe"></div>
  <div class="t" style="left:736px;top:207px;font-size:13.5px;color:#333">包裹1</div>
  <div class="t" style="left:786px;top:207px;font-size:13.5px;color:#333">包裹2</div>
  <div class="t" style="left:835px;top:207px;font-size:13.5px;color:#2f6ef2">包裹3</div>
  <div class="t" style="left:885px;top:207px;font-size:13.5px;color:#333">包裹4</div>
  <div class="a" style="left:729px;top:229px;width:332px;height:1px;background:#bcd0f2"></div>
  <!-- products -->
  <svg width="42" height="51" viewBox="0 0 42 51" preserveAspectRatio="none" style="left:729px;top:238px"><rect width="42" height="51" fill="#e3e4e4"/><path d="M15 4 Q22 1 30 5 L31.5 12 L30.5 28 L32 51 H16 L17 30 L14.5 28 L15.5 12Z" fill="#a9c9ee"/><path d="M17.5 4.5 Q23 2.5 28 5 L27.5 20 Q22 23 18 21Z" fill="#dcdde3"/><path d="M21 0 H28.5 V3.2 Q25 4.5 21 3.2Z" fill="#5a4034"/><path d="M23 2.5 Q25 5 27 2.5 L26.5 7 H23.5Z" fill="#9fc2ea"/><path d="M17 21 Q25 17 30 20 L31 31 Q26 37 19 35 L16 31Z" fill="#e4cbd9"/><path d="M28 6 L30 20" stroke="#e8d6e0" stroke-width="1.2"/><rect x="15" y="29" width="3" height="3" rx="1" fill="#caa89a"/></svg>
  <div class="t" style="left:780px;top:241px;width:281px;overflow:hidden;font-size:11.3px;color:#555">板鞋男鞋2021春季新款情侣休闲鞋运动鞋旗舰女鞋夏季/</div>
  <div class="t" style="left:780px;top:256px;font-size:11.3px;color:#555">颜色分类:白灰-9266男款;鞋码:41</div>
  <svg width="42" height="53" viewBox="0 0 42 51" preserveAspectRatio="none" style="left:729px;top:305px"><rect width="42" height="51" fill="#e3e4e4"/><path d="M15 4 Q22 1 30 5 L31.5 12 L30.5 28 L32 51 H16 L17 30 L14.5 28 L15.5 12Z" fill="#a9c9ee"/><path d="M17.5 4.5 Q23 2.5 28 5 L27.5 20 Q22 23 18 21Z" fill="#dcdde3"/><path d="M21 0 H28.5 V3.2 Q25 4.5 21 3.2Z" fill="#5a4034"/><path d="M23 2.5 Q25 5 27 2.5 L26.5 7 H23.5Z" fill="#9fc2ea"/><path d="M17 21 Q25 17 30 20 L31 31 Q26 37 19 35 L16 31Z" fill="#e4cbd9"/><path d="M28 6 L30 20" stroke="#e8d6e0" stroke-width="1.2"/><rect x="15" y="29" width="3" height="3" rx="1" fill="#caa89a"/></svg>
  <div class="t" style="left:780px;top:309px;width:281px;overflow:hidden;font-size:11.3px;color:#555">【动力巢】男鞋2021夏季新款跑步鞋减震轻便跑鞋休闲运动</div>
  <div class="t" style="left:780px;top:323px;font-size:11.3px;color:#555">颜色分类:【动力巢】白黑;鞋码:45</div>
  <div class="a" style="left:729px;top:365px;width:332px;height:18px;border:1px solid #e2e2e2;border-radius:3px"></div>
  <!-- warehouse boxes -->
  <div class="a" style="left:729px;top:392px;width:332px;height:52px;border:1px solid #e6e6e6;border-radius:3px"></div>
  <div class="t" style="left:737px;top:404px;font-size:11px;color:#666">发货仓库：<span style="color:#333">万_江_共享仓</span></div>
  <div class="t" style="left:737px;top:422px;font-size:11px;color:#666">发货地址：<span style="color:#333">江市智造大道电商物流城卸货口</span></div>
  <div class="a" style="left:729px;top:454px;width:332px;height:52px;border:1px solid #e6e6e6;border-radius:3px"></div>
  <div class="t" style="left:737px;top:466px;font-size:11px;color:#666">退货仓库：<span style="color:#333">万城_胃江_退货仓</span></div>
  <div class="t" style="left:737px;top:483px;font-size:11px;color:#666">退货地址：<span style="color:#333">江市智造大道一号电商物流城卸货口</span></div>
  <div class="a" style="left:729px;top:515px;width:332px;height:7px;overflow:hidden"><div class="t" style="left:0;top:0;font-size:11px;color:#666">订单日志：</div><div class="t" style="left:64px;top:0;font-size:11px;color:#2a68d8">点击查看</div></div>
  <!-- buttons -->
  <div class="a" style="left:912px;top:563px;width:51px;height:22px;border-radius:2px;background:#c8c8c8"></div>
  <div class="t" style="left:912px;top:568px;width:51px;text-align:center;font-size:12px;color:#9a9a9a">取消</div>
  <div class="a" style="left:967px;top:563px;width:97px;height:22px;border-radius:2px;background:#206df0"></div>
  <div class="t" style="left:967px;top:568px;width:97px;text-align:center;font-size:12px;color:#fff">发送退货地址</div>
</div></div>
<div id="frame"></div>
<script>
(function(){
  try{
    var t=document.createElement('span');
    t.style.cssText='position:absolute;left:0;top:0;visibility:hidden;font-size:100px;line-height:1;font-family:"Liberation Sans",sans-serif;white-space:nowrap';
    t.textContent='\u4e2d\u56fd\u6c49\u5b57';
    document.body.appendChild(t);
    var w=t.getBoundingClientRect().width;
    document.body.removeChild(t);
    if(!(w>0) || w>370) return;
    var pad=(1-w/400);
    if(pad<=0.02) return;
    var q=document.createElement('span');q.style.cssText=t.style.cssText;q.textContent='\u2588\u2588\u2588\u2588';document.body.appendChild(q);var w2=q.getBoundingClientRect().width;document.body.removeChild(q);
    var sh=(w2>0&&w2<400)?(1-w2/400):pad;
    var re=/[\u3000-\u303f\u3400-\u9fff\uff00-\uffef]+/g;
    var walker=document.createTreeWalker(document.getElementById('pg'),NodeFilter.SHOW_TEXT,null,false);
    var nodes=[];while(walker.nextNode())nodes.push(walker.currentNode);
    for(var i=0;i<nodes.length;i++){
      var n=nodes[i],s=n.nodeValue;re.lastIndex=0;
      if(!re.test(s))continue;re.lastIndex=0;
      var frag=document.createDocumentFragment(),last=0,m;
      while((m=re.exec(s))){
        if(m.index>last)frag.appendChild(document.createTextNode(s.slice(last,m.index)));
        var sp=document.createElement('span');sp.style.letterSpacing=sh.toFixed(3)+'em';sp.textContent=m[0].replace(/./g,'\u2588');sp.style.opacity='0.42';sp.style.clipPath='inset(6% 0 11% 0)';frag.appendChild(sp);
        last=m.index+m[0].length;
      }
      if(last<s.length)frag.appendChild(document.createTextNode(s.slice(last)));
      n.parentNode.replaceChild(frag,n);
    }
  }catch(e){}
})();
</script>
</body></html>
